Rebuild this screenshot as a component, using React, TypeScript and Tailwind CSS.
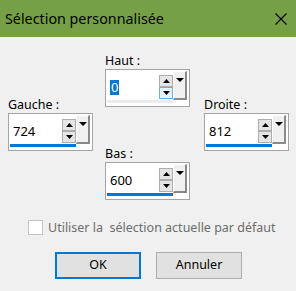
function Tri({ up, w, h }: { up?: boolean; w: number; h: number }) {
  const pts = up ? `0,${h} ${w / 2},0 ${w},${h}` : `0,0 ${w},0 ${w / 2},${h}`
  return (
    <svg width={w} height={h} viewBox={`0 0 ${w} ${h}`} className="block">
      <polygon points={pts} fill="#000" />
    </svg>
  )
}

function SpinField({
  value,
  selected,
  fill,
  hoverDown,
}: {
  value: string
  selected?: boolean
  fill?: boolean
  hoverDown?: boolean
}) {
  return (
    <div className="flex h-[38px] w-[85px] border border-[#a5a5a5] bg-white pl-px pt-px">
      <div className="flex w-[66px] flex-col">
        <div className="flex h-[29px] justify-between">
          <div className="flex items-end pb-[5px] pl-[3px]">
            {selected ? (
              <span className="bg-[#0078d7] px-px text-[13px] leading-[15px] text-white">
                {value}
              </span>
            ) : (
              <span className="text-[13px] leading-[15px] text-black">{value}</span>
            )}
          </div>
          <div className="mb-px flex flex-col self-end">
            <div className="flex h-[12px] w-[14px] items-center justify-center border border-[#adadad] bg-[#e5e5e5]">
              <Tri up w={7} h={4} />
            </div>
            <div
              className={
                hoverDown
                  ? 'flex h-[12px] w-[14px] items-center justify-center border border-[#6aaee8] bg-[#e5f1fb]'
                  : 'flex h-[12px] w-[14px] items-center justify-center border border-[#adadad] bg-[#e5e5e5]'
              }
            >
              <Tri w={7} h={4} />
            </div>
          </div>
        </div>
        <div className={fill ? 'h-[3px] bg-[#0078d7]' : 'h-[3px] bg-[#ececec]'} />
      </div>
      <div className="flex h-[29px] w-[14px] justify-center border-t border-l border-t-white border-l-white border-r-2 border-b-2 border-r-[#8a8a8a] border-b-[#8a8a8a] bg-[#f0f0f0] pt-[6px]">
        <Tri w={8} h={4} />
      </div>
    </div>
  )
}

function Label({ children }: { children: string }) {
  return <div className="h-[17px] text-[12.5px] leading-[17px] text-black">{children}</div>
}

export default function App() {
  return (
    <div className="h-[291px] w-[296px] overflow-hidden bg-[#f0f0f0] font-['Noto_Sans',sans-serif]">
      {/* Title bar */}
      <div className="flex h-[37px] items-center justify-between bg-[#76a046] pl-[5px] pr-[9px]">
        <span className="text-[14.3px] text-black">Sélection personnalisée</span>
        <svg width="12" height="12" viewBox="0 0 12 12">
          <path d="M0.5 0.5 L11.5 11.5 M11.5 0.5 L0.5 11.5" stroke="#000" strokeWidth="1.1" />
        </svg>
      </div>

      {/* Fields */}
      <div className="flex pl-[8px]">
        <div className="w-[85px] pt-[59px]">
          <Label>Gauche :</Label>
          <SpinField value="724" fill />
        </div>
        <div className="ml-[12px] w-[85px] pt-[15px]">
          <Label>Haut :</Label>
          <SpinField value="0" selected hoverDown />
          <div className="mt-[38px]">
            <Label>Bas :</Label>
            <SpinField value="600" fill />
          </div>
        </div>
        <div className="ml-[14px] w-[85px] pt-[59px]">
          <Label>Droite :</Label>
          <SpinField value="812" fill />
        </div>
      </div>

      {/* Checkbox */}
      <div className="mt-[19px] flex items-center pl-[28px]">
        <div className="h-[15px] w-[15px] flex-none border border-[#c4c4c4] bg-white" />
        <span className="ml-[5px] whitespace-pre text-[12.5px] leading-[17px] text-[#6d6d6d]">
          Utiliser la  sélection actuelle par défaut
        </span>
      </div>

      {/* Buttons */}
      <div className="mt-[16px] flex gap-[15px] pl-[55px]">
        <button className="h-[27px] w-[86px] border-2 border-[#0078d7] bg-[#e1e1e1] text-[12.5px] text-black">
          OK
        </button>
        <button className="h-[27px] w-[86px] border border-[#adadad] bg-[#e1e1e1] text-[12.5px] text-black">
          Annuler
        </button>
      </div>
    </div>
  )
}
